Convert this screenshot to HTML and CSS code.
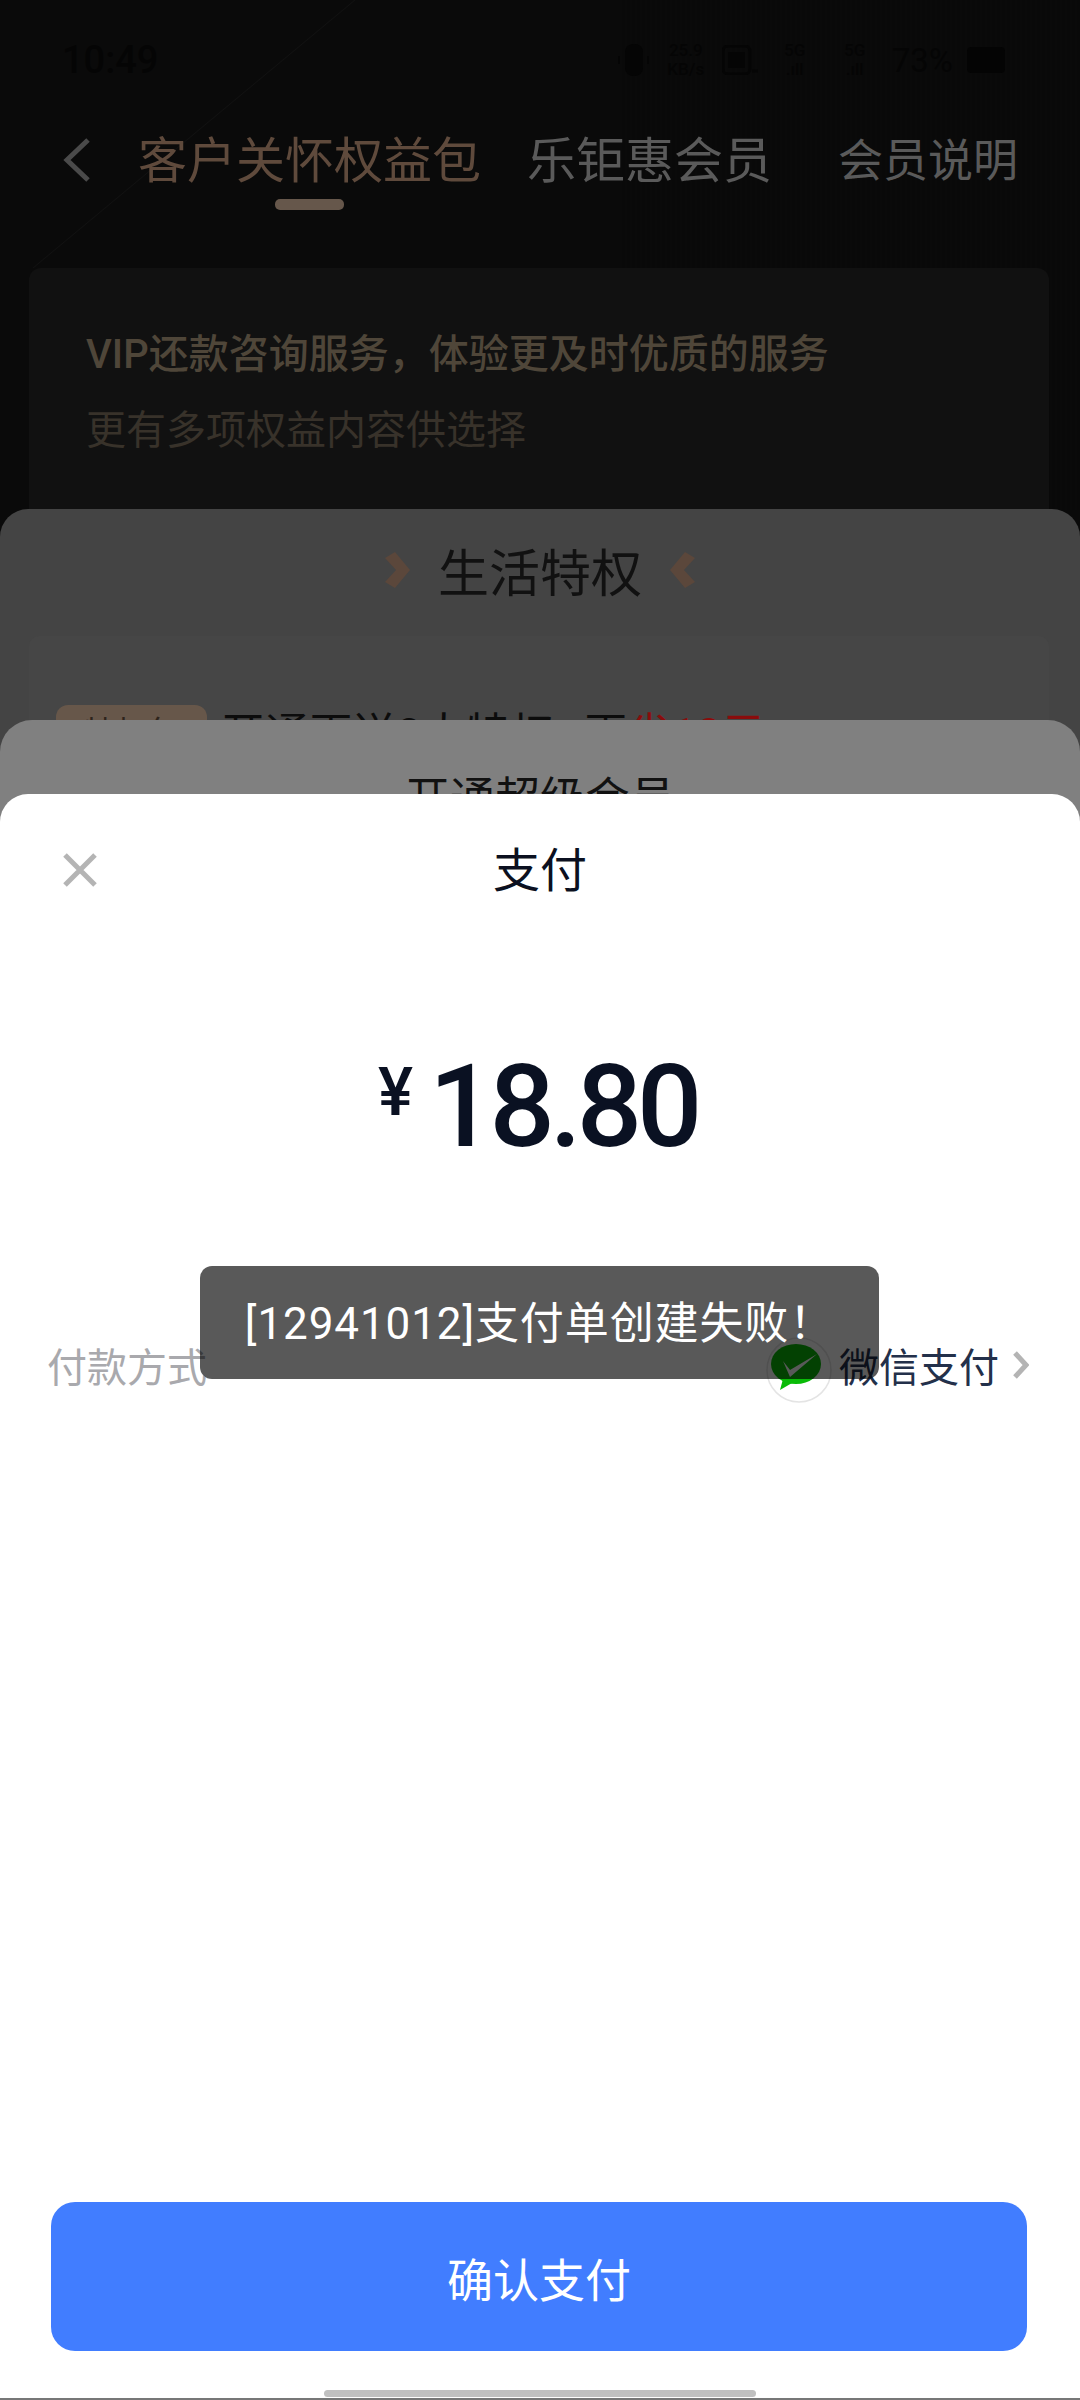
FILE: index.html
```html
<!DOCTYPE html>
<html lang="zh-CN">
<head>
  <meta charset="UTF-8">
  <meta name="viewport" content="width=device-width, initial-scale=1.0">
  <title>支付</title>
  <link rel="stylesheet" href="styles.css">
</head>
<body>
  <div class="page">
    <div class="status-bar">
      <span class="time">10:49</span>
      <div class="status-icons">
        <svg class="icon-vibrate" width="33" height="34" viewBox="0 0 33 34"><rect x="8" y="1" width="18" height="32" rx="8" fill="#050505"/><path d="M2 13v8M31 13v8" stroke="#050505" stroke-width="2"/></svg>
        <span class="speed">25.9<br>KB/s</span>
        <svg width="36" height="30" viewBox="0 0 36 30"><rect x="1" y="1" width="27" height="28" rx="5" fill="none" stroke="#050505" stroke-width="3"/><rect x="6" y="7" width="17" height="16" fill="#050505"/><path d="M30 26h6" stroke="#050505" stroke-width="3"/></svg>
        <span class="signal">5G<br>.ıll</span>
        <span class="signal">5G<br>.ıll</span>
        <span class="battery-text">73%</span>
        <span class="battery"></span>
      </div>
    </div>

    <div class="nav">
      <svg class="back" width="28" height="46" viewBox="0 0 28 46"><path d="M25 3 4 23l21 20" fill="none" stroke="#4a4a4a" stroke-width="5"/></svg>
      <div class="tab tab-active">
        <span>客户关怀权益包</span>
        <span class="tab-line"></span>
      </div>
      <div class="tab">乐钜惠会员</div>
      <div class="tab tab-help">会员说明</div>
    </div>

    <div class="intro-card">
      <div class="intro-title">VIP还款咨询服务，体验更及时优质的服务</div>
      <div class="intro-sub">更有多项权益内容供选择</div>
    </div>
  </div>

  <div class="sheet sheet-life">
    <div class="life-title">
      <svg width="25" height="36" viewBox="0 0 25 36"><path d="M0 6 10 0l15 18-15 18-10-6 11-12z" fill="#5b473b"/></svg>
      <span>生活特权</span>
      <svg width="25" height="36" viewBox="0 0 25 36"><path d="M25 6 15 0 0 18l15 18 10-6-11-12z" fill="#5b473b"/></svg>
    </div>
    <div class="life-card">
      <div class="life-row">
        <span class="life-tag">特权包</span>
        <span>开通再送3大特权<span class="life-comma">，</span>再<em class="life-save">省18元</em></span>
      </div>
    </div>
  </div>

  <div class="sheet sheet-vip">
    <div class="vip-title">开通超级会员</div>
  </div>

  <div class="sheet sheet-pay">
    <div class="pay-head">
      <svg class="pay-close" width="36" height="36" viewBox="0 0 36 36"><path d="M3 3l30 30M33 3 3 33" stroke="#b4b4b4" stroke-width="5"/></svg>
      <span>支付</span>
    </div>

    <div class="amount">
      <span class="amount-sign">¥</span>
      <span class="amount-value">18.80</span>
    </div>

    <div class="pay-row">
      <span class="pay-label">付款方式</span>
      <div class="pay-method">
        <svg class="wechat" width="66" height="66" viewBox="0 0 66 66">
          <circle cx="33" cy="33" r="32" fill="#fff" stroke="#e4e4e4" stroke-width="1.5"/>
          <ellipse cx="30" cy="27" rx="25" ry="20" fill="#09bb07"/>
          <path d="M17 42l-3 11 12-7z" fill="#09bb07"/>
          <path d="M17 24l7 9 27-16-27 23z" fill="#fff"/>
        </svg>
        <span class="pay-name">微信支付</span>
        <svg width="16" height="28" viewBox="0 0 16 28"><path d="M2 2l11 12L2 26" fill="none" stroke="#b4b4b4" stroke-width="5"/></svg>
      </div>
    </div>

    <button type="button" class="pay-btn">确认支付</button>
    <div class="home-bar"></div>
  </div>

  <div class="toast">[12941012]支付单创建失败！</div>
</body>
</html>
```

FILE: styles.css
```css
* {
  box-sizing: border-box;
}

html, body {
  margin: 0;
  padding: 0;
}

body {
  position: relative;
  width: 1080px;
  height: 2400px;
  overflow: hidden;
  font-family: Roboto, "Noto Sans CJK SC", sans-serif;
  background-color: #0a0a0a;
  background-image:
    linear-gradient(to bottom right, transparent 49.8%, #111 50%, transparent 50.2%),
    repeating-linear-gradient(90deg, #0a0a0a 0, #0a0a0a 2px, #090909 2px, #090909 5px);
  background-size: 322px 268px, 460px 510px;
  background-position: 33px 0, 620px 0;
  background-repeat: no-repeat;
}

.status-bar {
  height: 120px;
  padding: 0 75px 0 62px;
  display: flex;
  align-items: center;
  justify-content: space-between;
  color: #050505;
}

.time {
  font-size: 38px;
  font-weight: 500;
}

.status-icons {
  display: flex;
  align-items: center;
  gap: 14px;
}

.speed, .signal {
  font-size: 17px;
  line-height: 19px;
  font-weight: 500;
  text-align: center;
}

.speed {
  width: 44px;
  white-space: nowrap;
}

.signal {
  width: 46px;
}

.battery-text {
  font-size: 33px;
}

.battery {
  width: 38px;
  height: 26px;
  border-radius: 4px;
  background: #040404;
}

.nav {
  height: 148px;
  padding: 2px 62px 0 63px;
  display: flex;
  align-items: flex-start;
  font-size: 49px;
  line-height: 80px;
  color: #5a5a5a;
}

.back {
  margin: 15px 47px 0 0;
}

.tab {
  display: flex;
  flex-direction: column;
  align-items: center;
}

.tab-active {
  color: #5f4a3c;
  margin-right: 46px;
}

.tab-line {
  width: 69px;
  height: 11px;
  margin-top: -3px;
  border-radius: 5px;
  background: #66574b;
}

.tab-help {
  margin-left: auto;
  font-size: 45px;
}

.intro-card {
  width: 1020px;
  height: 400px;
  margin-left: 29px;
  padding: 57px 0 0 57px;
  border-radius: 12px;
  background: #111;
}

.intro-title {
  font-size: 40px;
  line-height: 60px;
  font-weight: 500;
  color: #4f4639;
}

.intro-sub {
  margin-top: 16px;
  font-size: 40px;
  line-height: 60px;
  color: #38322a;
}

/* stacked sheets */
.sheet {
  position: absolute;
  left: 0;
  right: 0;
  bottom: 0;
  border-radius: 28px 28px 0 0;
}

.sheet-life {
  top: 509px;
  background: #444;
}

.life-title {
  height: 121px;
  margin-bottom: 6px;
  display: flex;
  align-items: center;
  justify-content: center;
  gap: 28px;
  font-size: 51px;
  color: #111;
}

.life-card {
  width: 1020px;
  height: 300px;
  margin-left: 29px;
  padding: 69px 0 0 27px;
  border-radius: 10px;
  background: #464646;
}

.life-row {
  display: flex;
  align-items: flex-start;
  gap: 14px;
  font-size: 44px;
  line-height: 60px;
  color: #0c0c0c;
}

.life-tag {
  width: 151px;
  height: 56px;
  border-radius: 12px;
  background: #67574a;
  font-size: 32px;
  line-height: 56px;
  text-align: center;
  color: #2e241c;
}

.life-comma {
  letter-spacing: -14px;
}

.life-save {
  font-style: normal;
  color: #8a0c0c;
}

.sheet-vip {
  top: 720px;
  background: #808080;
  border-radius: 32px 32px 0 0;
}

.vip-title {
  padding-top: 50px;
  font-size: 45px;
  line-height: 60px;
  text-align: center;
  color: #111;
}

.sheet-pay {
  top: 794px;
  display: flex;
  flex-direction: column;
  border-bottom: 2px solid #777;
  background: #fff;
}

.pay-head {
  position: relative;
  height: 150px;
  font-size: 47px;
  line-height: 153px;
  text-align: center;
  color: #0b1020;
}

.pay-close {
  position: absolute;
  left: 62px;
  top: 58px;
}

.amount {
  height: 140px;
  margin-top: 90px;
  padding-left: 378px;
  display: flex;
  align-items: flex-start;
  font-weight: 500;
  color: #0a1122;
}

.amount-sign {
  font-size: 66px;
  line-height: 118px;
  margin-right: 16px;
}

.amount-value {
  font-size: 115px;
  line-height: 146px;
  letter-spacing: -5px;
}

.pay-row {
  height: 80px;
  margin-top: 151px;
  padding: 0 51px 0 47px;
  display: flex;
  align-items: center;
  justify-content: space-between;
  font-size: 40px;
}

.pay-label {
  color: #a9a9ad;
}

.pay-method {
  display: flex;
  align-items: center;
}

.wechat {
  margin: 10px 7px 0 0;
}

.pay-name {
  margin-right: 14px;
  color: #23304a;
}

.pay-btn {
  width: 976px;
  height: 149px;
  margin: auto 0 0 51px;
  border: none;
  border-radius: 24px;
  background: #417dff;
  font-family: inherit;
  font-size: 46px;
  color: #fff;
}

.home-bar {
  width: 432px;
  height: 7px;
  margin: 39px auto 1px;
  border-radius: 4px;
  background: #c0c0c0;
}

.toast {
  position: absolute;
  left: 200px;
  top: 1266px;
  width: 679px;
  height: 113px;
  border-radius: 12px;
  background: rgba(0, 0, 0, 0.65);
  font-size: 44px;
  line-height: 117px;
  letter-spacing: 0.9px;
  text-align: center;
  color: #fff;
}
```
